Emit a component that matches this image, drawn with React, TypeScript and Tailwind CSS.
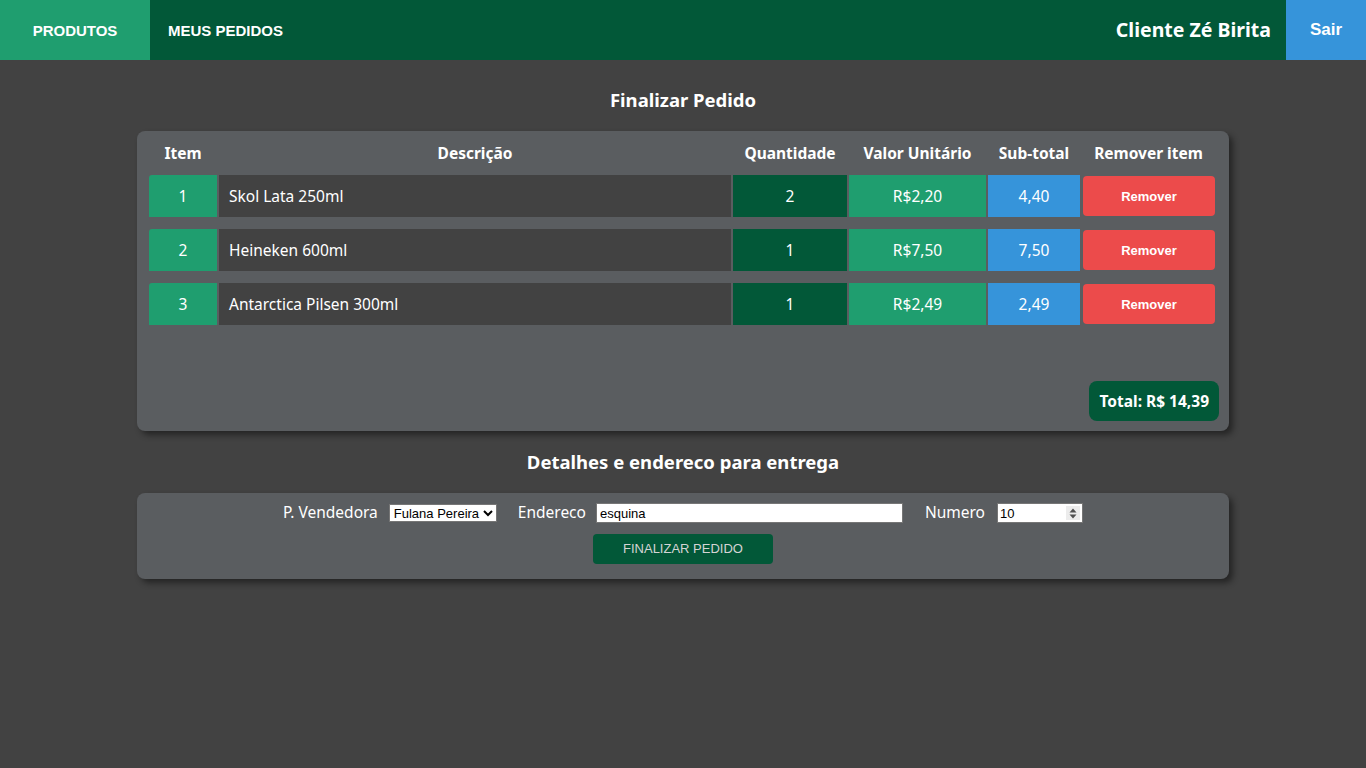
import { useState } from "react";

interface Item {
    id: number;
    descricao: string;
    quantidade: number;
    valor: number;
}

const itens: Item[] = [
    { id: 1, descricao: "Skol Lata 250ml", quantidade: 2, valor: 2.2 },
    { id: 2, descricao: "Heineken 600ml", quantidade: 1, valor: 7.5 },
    { id: 3, descricao: "Antarctica Pilsen 300ml", quantidade: 1, valor: 2.49 },
];

const brl = (n: number) => n.toFixed(2).replace(".", ",");

const cols = "grid grid-cols-[68px_512px_114px_137px_92px_133px] gap-x-[2px]";

export default function App() {
    const [endereco, setEndereco] = useState("esquina");
    const [numero, setNumero] = useState("10");
    const total = itens.reduce((acc, i) => acc + i.quantidade * i.valor, 0);

    return (
        <div className="min-h-screen bg-[#424242] text-white font-['Noto_Sans',sans-serif]">
            <nav className="h-[60px] bg-[#025838] flex items-stretch">
                <a className="w-[150px] pt-[2px] bg-[#1f9e6f] flex items-center justify-center font-['Liberation_Sans',Arial,sans-serif] font-bold text-[15px]">
                    PRODUTOS
                </a>
                <a className="pl-[18px] pt-[2px] flex items-center font-['Liberation_Sans',Arial,sans-serif] font-bold text-[15px]">
                    MEUS PEDIDOS
                </a>
                <div className="flex-1" />
                <span className="flex items-center pr-[15px] font-bold text-[19.5px]">Cliente Zé Birita</span>
                <button className="w-[80px] bg-[#3694da] flex items-center justify-center font-['Liberation_Sans',Arial,sans-serif] font-bold text-[17px]">
                    Sair
                </button>
            </nav>

            <h1 className="pt-[28px] pb-[19px] leading-[24px] text-center font-bold text-[18.5px]">Finalizar Pedido</h1>

            <section className="mx-auto w-[1092px] bg-[#5a5d60] rounded-lg shadow-[4px_4px_6px_rgba(0,0,0,0.45)] pt-[11px] pb-[10px] pl-[12px] pr-[13px]">
                <div className={`${cols} h-[22px] items-center text-center font-bold text-[15.5px] mb-[11px]`}>
                    <span>Item</span>
                    <span>Descrição</span>
                    <span>Quantidade</span>
                    <span>Valor Unitário</span>
                    <span>Sub-total</span>
                    <span>Remover item</span>
                </div>
                <div className="flex flex-col gap-[12px]">
                    {itens.map((item) => (
                        <div key={item.id} className={`${cols} h-[42px] text-[15.5px]`}>
                            <span className="bg-[#1f9e6f] pt-[1px] rounded-tl-[3px] flex items-center justify-center">{item.id}</span>
                            <span className="bg-[#424242] pt-[1px] flex items-center pl-[10px]">{item.descricao}</span>
                            <span className="bg-[#025838] pt-[1px] flex items-center justify-center">{item.quantidade}</span>
                            <span className="bg-[#1f9e6f] pt-[1px] flex items-center justify-center">R${brl(item.valor)}</span>
                            <span className="bg-[#3694da] pt-[1px] flex items-center justify-center">{brl(item.quantidade * item.valor)}</span>
                            <button className="ml-[1px] my-[1px] pt-[1px] bg-[#ec4b4b] rounded-[4px] font-['Liberation_Sans',Arial,sans-serif] font-bold text-[13px]">
                                Remover
                            </button>
                        </div>
                    ))}
                </div>
                <div className="flex justify-end mt-[56px] -mr-[3px]">
                    <span className="h-[40px] px-[10px] pt-[1px] rounded-lg bg-[#025838] flex items-center font-bold text-[15.5px]">
                        Total: R$ {brl(total)}
                    </span>
                </div>
            </section>

            <h2 className="mt-[19px] mb-[19px] leading-[24px] text-center font-bold text-[18.5px]">
                Detalhes e endereco para entrega
            </h2>

            <section className="mx-auto w-[1092px] bg-[#5a5d60] rounded-lg shadow-[4px_4px_6px_rgba(0,0,0,0.45)] pt-[10px] pb-[15px] flex flex-col items-center">
                <div className="h-[20px] flex items-center text-[15.5px]">
                    <label className="mr-[11px]">P. Vendedora</label>
                    <select className="h-[18px] w-[108px] bg-white text-black border border-[#767676] font-['Liberation_Sans',Arial,sans-serif] text-[13px] mr-[21px]">
                        <option>Fulana Pereira</option>
                    </select>
                    <label className="mr-[10px]">Endereco</label>
                    <input
                        value={endereco}
                        onChange={(e) => setEndereco(e.target.value)}
                        className="h-[20px] w-[307px] bg-white text-black border border-[#767676] px-[3px] font-['Liberation_Sans',Arial,sans-serif] text-[13px] mr-[22px]"
                    />
                    <label className="mr-[12px]">Numero</label>
                    <div className="relative">
                        <input
                            type="number"
                            value={numero}
                            onChange={(e) => setNumero(e.target.value)}
                            className="block h-[20px] w-[86px] bg-white text-black border border-[#767676] px-[2px] font-['Liberation_Sans',Arial,sans-serif] text-[13px]"
                        />
                        <span className="absolute right-[3px] top-[3px] w-[14px] h-[14px] bg-[#ececec] flex items-center justify-center pointer-events-none">
                            <svg width="8" height="11" viewBox="0 0 8 11">
                                <path d="M4 0.5 L7.5 4.5 H0.5 Z M4 10.5 L7.5 6.5 H0.5 Z" fill="#505050" />
                            </svg>
                        </span>
                    </div>
                </div>
                <button className="mt-[11px] h-[30px] w-[180px] rounded-[4px] bg-[#025838] text-[#d4d4d4] font-['Liberation_Sans',Arial,sans-serif] text-[13px]">
                    FINALIZAR PEDIDO
                </button>
            </section>
        </div>
    );
}
